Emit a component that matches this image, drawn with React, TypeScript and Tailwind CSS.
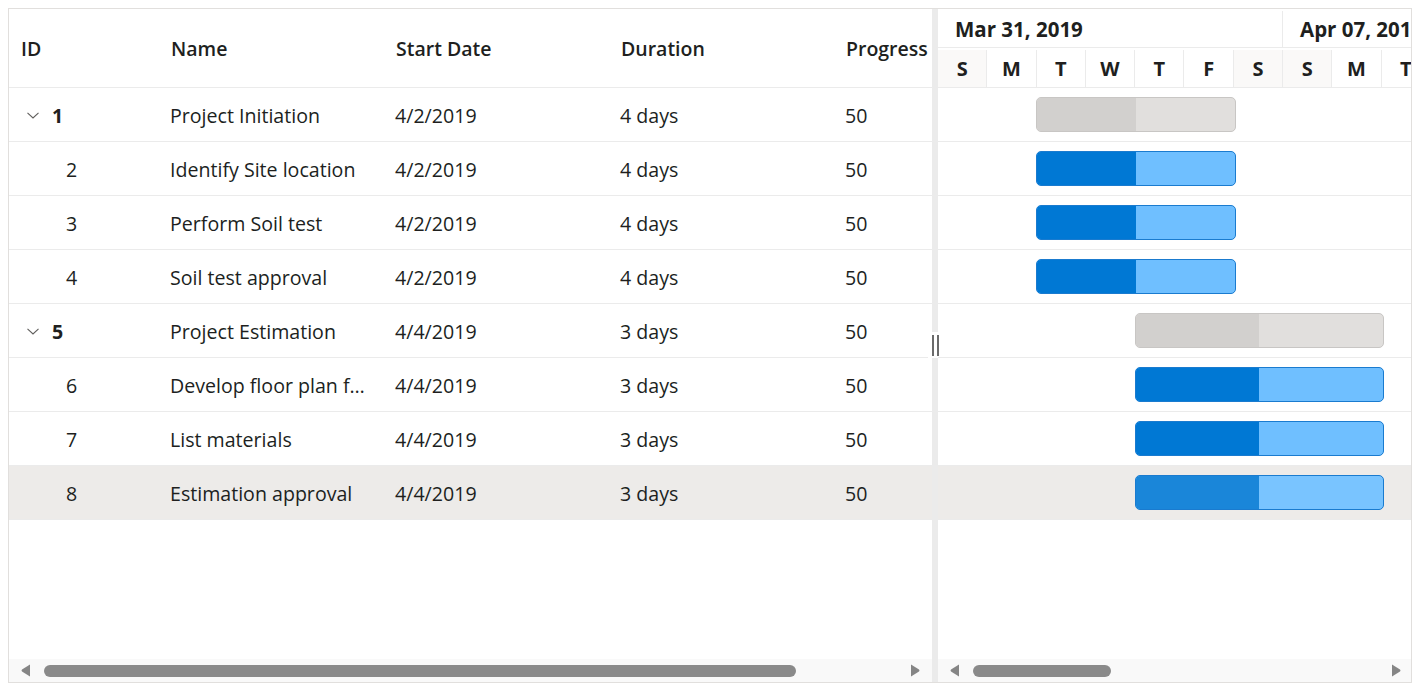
import React from "react";

type Row = {
  id: number;
  name: string;
  start: string;
  dur: string;
  prog: number;
  parent?: boolean;
  startDay: number;
  span: number;
  selected?: boolean;
};

const rows: Row[] = [
  { id: 1, name: "Project Initiation", start: "4/2/2019", dur: "4 days", prog: 50, parent: true, startDay: 2, span: 4 },
  { id: 2, name: "Identify Site location", start: "4/2/2019", dur: "4 days", prog: 50, startDay: 2, span: 4 },
  { id: 3, name: "Perform Soil test", start: "4/2/2019", dur: "4 days", prog: 50, startDay: 2, span: 4 },
  { id: 4, name: "Soil test approval", start: "4/2/2019", dur: "4 days", prog: 50, startDay: 2, span: 4 },
  { id: 5, name: "Project Estimation", start: "4/4/2019", dur: "3 days", prog: 50, parent: true, startDay: 4, span: 5 },
  { id: 6, name: "Develop floor plan for estimation", start: "4/4/2019", dur: "3 days", prog: 50, startDay: 4, span: 5 },
  { id: 7, name: "List materials", start: "4/4/2019", dur: "3 days", prog: 50, startDay: 4, span: 5 },
  { id: 8, name: "Estimation approval", start: "4/4/2019", dur: "3 days", prog: 50, startDay: 4, span: 5, selected: true },
];

const D = 49.3;
const days = ["S", "M", "T", "W", "T", "F", "S", "S", "M", "T", "W", "T", "F", "S"];

function Chevron() {
  return (
    <svg width="12" height="7" viewBox="0 0 12 7" fill="none">
      <path d="M0.5 0.8 L6 6 L11.5 0.8" stroke="#605e5c" strokeWidth="1.1" />
    </svg>
  );
}

function ArrowLeft() {
  return (
    <svg width="10" height="13" viewBox="0 0 10 13">
      <path d="M9 0.5 L9 12.5 L1 7.5 Q0 6.5 1 5.5 Z" fill="#858585" />
    </svg>
  );
}
function ArrowRight() {
  return (
    <svg width="10" height="13" viewBox="0 0 10 13">
      <path d="M1 0.5 L1 12.5 L9 7.5 Q10 6.5 9 5.5 Z" fill="#858585" />
    </svg>
  );
}

export default function App() {
  return (
    <div
      className="w-[1418px] h-[688px] bg-white p-2 text-[#201f1e]"
      style={{ fontFamily: '"Open Sans", "Noto Sans", sans-serif' }}
    >
      <div className="flex h-[675px] w-[1404px] border border-[#e1dfdd]">
        {/* Grid pane */}
        <div className="flex w-[923px] flex-col overflow-hidden">
          <div className="flex h-[79px] shrink-0 items-center border-b border-[#ebebeb] pt-[2px] text-[19.5px] font-semibold">
            <div className="w-[150px] shrink-0 pl-3">ID</div>
            <div className="w-[225px] shrink-0 pl-3">Name</div>
            <div className="w-[225px] shrink-0 pl-3">Start Date</div>
            <div className="w-[225px] shrink-0 pl-3">Duration</div>
            <div className="w-[225px] shrink-0 whitespace-nowrap pl-3">Progress</div>
          </div>
          {rows.map((r) => (
            <div
              key={r.id}
              className={`flex h-[54px] shrink-0 items-center border-b border-[#ebebeb] pt-[2px] text-[19.6px] ${
                r.selected ? "bg-[#edebe9]" : ""
              }`}
            >
              <div className="flex w-[150px] shrink-0 items-center pl-3">
                {r.parent ? (
                  <>
                    <span className="flex w-[24px] justify-center">
                      <Chevron />
                    </span>
                    <span className="ml-[7px] font-bold">{r.id}</span>
                  </>
                ) : (
                  <span className="ml-[45px]">{r.id}</span>
                )}
              </div>
              <div className="w-[225px] shrink-0 truncate pl-[11px] pr-[14px]">{r.name}</div>
              <div className="w-[225px] shrink-0 pl-[11px]">{r.start}</div>
              <div className="w-[225px] shrink-0 pl-[11px]">{r.dur}</div>
              <div className="w-[225px] shrink-0 pl-[11px]">{r.prog}</div>
            </div>
          ))}
          <div className="flex-1" />
          <div className="flex h-[23px] shrink-0 items-center bg-[#f9f9f9] px-3">
            <ArrowLeft />
            <div className="ml-[13px] h-[12px] w-[752px] rounded-full bg-[#8a8a8a]" />
            <div className="flex-1" />
            <ArrowRight />
          </div>
        </div>

        {/* Splitter */}
        <div className="relative w-[6px] shrink-0 bg-[#ebebeb]">
          <div className="absolute left-[-4px] top-[323px] flex h-[26px] w-[14px] items-center justify-center gap-[3px] bg-white">
            <div className="h-[21px] w-[2px] bg-[#6b6b6b]" />
            <div className="h-[21px] w-[2px] bg-[#6b6b6b]" />
          </div>
        </div>

        {/* Chart pane */}
        <div className="flex flex-1 flex-col overflow-hidden">
          <div className="flex h-[79px] shrink-0 flex-col border-b border-[#ebebeb]">
            <div className="flex h-[39px] shrink-0 border-b border-[#ebebeb] pt-[2px] text-[20.5px] font-bold">
              <div className="flex w-[345px] shrink-0 items-center border-r border-[#ebebeb] pl-[17px]">
                Mar 31, 2019
              </div>
              <div className="flex w-[345px] shrink-0 items-center whitespace-nowrap pl-[17px]">
                Apr 07, 2019
              </div>
            </div>
            <div className="flex flex-1 pt-[2px] text-[20px] font-bold">
              {days.map((d, i) => (
                <div
                  key={i}
                  className={`flex shrink-0 items-center justify-center border-r border-[#ebebeb] ${
                    d === "S" ? "bg-[#faf9f8]" : ""
                  }`}
                  style={{ width: D }}
                >
                  {d}
                </div>
              ))}
            </div>
          </div>
          {rows.map((r) => {
            const left = r.startDay * D;
            const width = r.span * D + 1.5;
            const pw = (r.span * D * r.prog) / 100;
            const done = r.parent ? "bg-[#d2d0ce]" : r.selected ? "bg-[#1a86d9]" : "bg-[#0078d4]";
            const rest = r.parent ? "bg-[#e1dfdd]" : r.selected ? "bg-[#79c4ff]" : "bg-[#6fbfff]";
            const border = r.parent ? "border-[#c8c6c4]" : "border-[#1a7bcf]";
            return (
              <div
                key={r.id}
                className={`relative h-[54px] shrink-0 border-b border-[#ebebeb] ${
                  r.selected ? "bg-[#edebe9]" : ""
                }`}
              >
                <div
                  className={`absolute top-[9px] flex h-[35px] overflow-hidden rounded-[5px] border ${border} ${rest}`}
                  style={{ left: left - 0.5, width: width + 1 }}
                >
                  <div className={`h-full ${done}`} style={{ width: pw }} />
                </div>
              </div>
            );
          })}
          <div className="flex-1" />
          <div className="flex h-[23px] shrink-0 items-center bg-[#f9f9f9] pl-[12px] pr-[10px]">
            <ArrowLeft />
            <div className="ml-[13px] h-[12px] w-[138px] rounded-full bg-[#8a8a8a]" />
            <div className="flex-1" />
            <ArrowRight />
          </div>
        </div>
      </div>
    </div>
  );
}
